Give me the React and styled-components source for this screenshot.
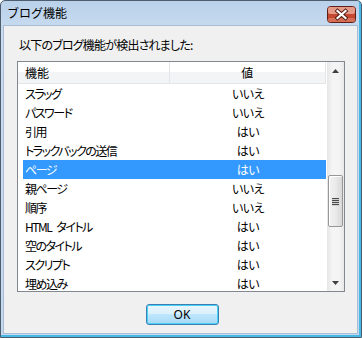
import React from "react";
import styled, { createGlobalStyle } from "styled-components";

const FEATURES = [
  ["スラッグ", "いいえ"],
  ["パスワード", "いいえ"],
  ["引用", "はい"],
  ["トラックバックの送信", "はい"],
  ["ページ", "はい"],
  ["親ページ", "いいえ"],
  ["順序", "いいえ"],
  ["HTML タイトル", "はい"],
  ["空のタイトル", "はい"],
  ["スクリプト", "はい"],
  ["埋め込み", "はい"],
];

const SELECTED = 4;

export default function App() {
  return (
    <>
      <GlobalStyle />
      <Window>
        <TitleBar>
          <Title>ブログ機能</Title>
          <CloseButton>
            <svg width="29" height="17" viewBox="0 0 29 17">
              <rect x="0.5" y="0.5" width="28" height="16" rx="3" fill="#c4482f" stroke="#5e1f18" />
              <rect x="1" y="1" width="27" height="7" rx="2" fill="#e49a86" />
              <rect x="1" y="12" width="27" height="4" rx="2" fill="#d46e56" />
              <path
                d="M10.5 5 L18.5 12 M18.5 5 L10.5 12"
                stroke="#4f1810"
                strokeWidth="4"
                strokeLinecap="square"
              />
              <path
                d="M10.5 5 L18.5 12 M18.5 5 L10.5 12"
                stroke="#ffffff"
                strokeWidth="2.2"
                strokeLinecap="square"
              />
            </svg>
          </CloseButton>
        </TitleBar>

        <Client>
          <Prompt>以下のブログ機能が検出されました:</Prompt>

          <ListView>
            <ListBody>
              <Header>
                <HeadCell>機能</HeadCell>
                <HeadCell $center>値</HeadCell>
                <HeadTail />
              </Header>
              {FEATURES.map(([name, value], i) => (
                <Row key={name} $selected={i === SELECTED}>
                  <Cell>{name}</Cell>
                  <Cell $center>{value}</Cell>
                </Row>
              ))}
            </ListBody>

            <ScrollBar>
              <ArrowButton>
                <svg width="7" height="4" viewBox="0 0 7 4">
                  <path d="M3.5 0 L7 4 L0 4 Z" fill="#404040" />
                </svg>
              </ArrowButton>
              <Track>
                <Thumb $offset={96}>
                  <Grip />
                  <Grip />
                  <Grip />
                  <Grip />
                </Thumb>
              </Track>
              <ArrowButton>
                <svg width="7" height="4" viewBox="0 0 7 4">
                  <path d="M0 0 L7 0 L3.5 4 Z" fill="#404040" />
                </svg>
              </ArrowButton>
            </ScrollBar>
          </ListView>

          <Footer>
            <OkButton>OK</OkButton>
          </Footer>
        </Client>
      </Window>
    </>
  );
}

const GlobalStyle = createGlobalStyle`
  html, body {
    margin: 0;
    padding: 0;
    background: #ffffff;
  }
  * {
    box-sizing: border-box;
  }
`;

const Window = styled.div`
  width: 362px;
  height: 338px;
  display: flex;
  flex-direction: column;
  border: 1px solid #4d5d6e;
  border-radius: 5px 5px 0 0;
  background: linear-gradient(#b9d1ea, #c9dcf0 30px, #c4d8ee);
  box-shadow: inset -2px -2px 0 #45b8e6;
  font-family: "Noto Sans CJK JP", sans-serif;
  color: #000;
  overflow: hidden;
`;

const TitleBar = styled.div`
  height: 24px;
  display: flex;
  align-items: center;
  justify-content: space-between;
  padding: 0 5px 0 6px;
`;

const Title = styled.div`
  font-size: 12px;
  line-height: 16px;
  color: #000;
`;

const CloseButton = styled.div`
  flex: none;
  width: 29px;
  height: 17px;
  margin-top: 2px;
  display: flex;

  svg {
    display: block;
  }
`;

const Client = styled.div`
  flex: 1;
  display: flex;
  flex-direction: column;
  margin: 0 3px 3px 2px;
  padding: 11px 12px 0 13px;
  background: #f0f0f0;
  border: 1px solid #a9bdd4;
`;

const Prompt = styled.div`
  font-size: 12px;
  line-height: 16px;
  padding-left: 2px;
  letter-spacing: -0.8px;
  font-feature-settings: "palt" 1;
`;

const ListView = styled.div`
  margin-top: 8px;
  height: 231px;
  display: flex;
  border: 1px solid #828790;
  background: #ffffff;
`;

const ListBody = styled.div`
  flex: 1;
  overflow: hidden;
`;

const Header = styled.div`
  display: flex;
  height: 22px;
  background: linear-gradient(#ffffff 50%, #f3f4f6 50%);
  border-bottom: 1px solid #e5e5e5;
`;

const HeadCell = styled.div`
  width: ${(p) => (p.$center ? "157px" : "152px")};
  display: flex;
  align-items: center;
  justify-content: ${(p) => (p.$center ? "center" : "flex-start")};
  padding-left: ${(p) => (p.$center ? "0" : "7px")};
  font-size: 12px;
  border-right: 1px solid #e3e5e8;
`;

const HeadTail = styled.div`
  flex: 1;
`;

const Row = styled.div`
  display: flex;
  height: 19px;
  margin-left: 5px;
  width: 303px;
  align-items: center;
  background: ${(p) => (p.$selected ? "#3399ff" : "transparent")};
  color: ${(p) => (p.$selected ? "#ffffff" : "#000000")};
  font-size: 12px;
  font-feature-settings: "palt" 1;
`;

const Cell = styled.div`
  width: ${(p) => (p.$center ? "156px" : "147px")};
  padding-left: ${(p) => (p.$center ? "0" : "2px")};
  text-align: ${(p) => (p.$center ? "center" : "left")};
  letter-spacing: ${(p) => (p.$center ? "-0.5px" : "-1.5px")};
  word-spacing: 4px;
  white-space: nowrap;
`;

const ScrollBar = styled.div`
  width: 17px;
  margin-left: 1px;
  display: flex;
  flex-direction: column;
  background: linear-gradient(90deg, #e6e6e6, #f4f4f4 30%, #f4f4f4 70%, #e9e9e9);
`;

const ArrowButton = styled.div`
  height: 17px;
  display: flex;
  align-items: center;
  justify-content: center;
`;

const Track = styled.div`
  flex: 1;
  display: flex;
  flex-direction: column;
`;

const Thumb = styled.div`
  margin-top: ${(p) => p.$offset}px;
  height: 52px;
  margin-left: 1px;
  margin-right: 1px;
  display: flex;
  flex-direction: column;
  align-items: center;
  justify-content: center;
  gap: 1px;
  border: 1px solid #979797;
  border-radius: 2px;
  background: linear-gradient(90deg, #f2f2f2, #eaeaea 50%, #d8d8d8);
  box-shadow: inset 1px 1px 0 #ffffff;
`;

const Grip = styled.div`
  width: 7px;
  height: 1px;
  background: #4a4a4a;
  box-shadow: 0 1px 0 #d0d0d0;
`;

const Footer = styled.div`
  display: flex;
  justify-content: center;
  margin-top: 12px;
`;

const OkButton = styled.div`
  width: 73px;
  height: 21px;
  margin-left: 2px;
  display: flex;
  align-items: center;
  justify-content: center;
  font-family: "Noto Sans", sans-serif;
  font-size: 12px;
  border: 1px solid #3c7fb1;
  border-radius: 3px;
  background: linear-gradient(#eaf6fd, #d9f0fc 50%, #bee6fd 50%, #a7d9f5);
  box-shadow: inset 0 0 0 1px #48d0f7;
`;
